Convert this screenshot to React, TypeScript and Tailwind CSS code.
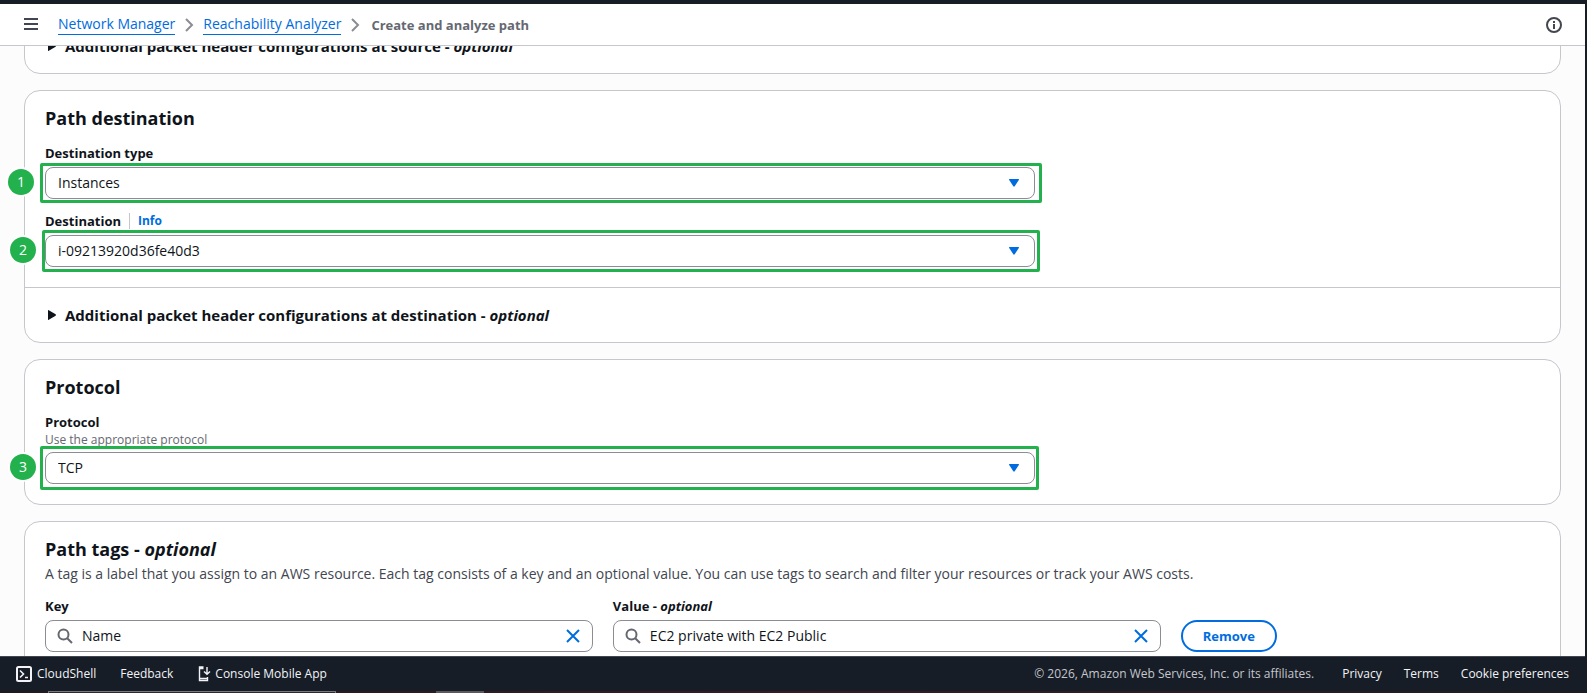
import { useId, useState } from "react";
import type { ReactNode } from "react";

interface SelectFieldProps {
  label: string;
  value: string;
  options: string[];
  step: number;
  outline: string;
  badge: string;
  info?: boolean;
  hint?: string;
}

function Card({ children }: { children: ReactNode }) {
  return <section className="rounded-2xl border border-[#c6c6cd] bg-white">{children}</section>;
}

function Expandable({ title }: { title: string }) {
  return (
    <button
      type="button"
      className="flex h-[54px] w-full items-center gap-2 px-5 text-left text-[15px] font-bold"
    >
      <svg viewBox="0 0 12 12" className="size-3 fill-[#0f141a]" aria-hidden="true">
        <path d="M3 1.6Q3 .8 3.8 1.2L10.6 5.3Q11.4 6 10.6 6.7L3.8 10.8Q3 11.2 3 10.4Z" />
      </svg>
      <span>
        {title} - <em>optional</em>
      </span>
    </button>
  );
}

function SelectField({ label, value, options, step, outline, badge, info, hint }: SelectFieldProps) {
  const id = useId();

  return (
    <div className="w-[66.2%]">
      <div className="flex h-5 items-center">
        <label htmlFor={id} className="text-[13px] font-bold">
          {label}
        </label>
        {info && (
          <a
            href="#info"
            className="ml-2 border-l border-[#c6c6cd] pl-2 text-xs font-bold text-[#006ce0]"
          >
            Info
          </a>
        )}
      </div>
      {hint && <p className="h-4 text-xs leading-4 text-[#656871]">{hint}</p>}
      <div className="relative mt-1">
        <select
          id={id}
          defaultValue={value}
          className="block h-8 w-full appearance-none rounded-lg border border-[#8c8c94] bg-white px-3"
        >
          {options.map((option) => (
            <option key={option}>{option}</option>
          ))}
        </select>
        <svg
          viewBox="0 0 12 10"
          className="pointer-events-none absolute top-[11px] right-[15px] h-[10px] w-3 fill-[#006ce0]"
          aria-hidden="true"
        >
          <path d="M1.6 1H10.4Q11.4 1 10.8 1.9L6.7 8.3Q6 9.2 5.3 8.3L1.2 1.9Q.6 1 1.6 1Z" />
        </svg>
        <div
          className={`pointer-events-none absolute rounded-[2px] border-3 border-[#22b14c] ${outline}`}
        />
        <span
          className={`absolute flex size-[26px] items-center justify-center rounded-full bg-[#22b14c] text-sm text-white ring-2 ring-white ${badge}`}
        >
          {step}
        </span>
      </div>
    </div>
  );
}

function SearchField({ label, initial }: { label: ReactNode; initial: string }) {
  const id = useId();
  const [value, setValue] = useState(initial);

  return (
    <div>
      <label htmlFor={id} className="block h-5 text-[13px] leading-5 font-bold">
        {label}
      </label>
      <div className="mt-1 flex h-8 items-center rounded-lg border border-[#8c8c94] bg-white px-[11px]">
        <svg viewBox="0 0 16 16" className="size-4 fill-none stroke-[#656871] stroke-2" aria-hidden="true">
          <circle cx="6.5" cy="6.5" r="5" />
          <path d="M10.2 10.2L15 15" />
        </svg>
        <input
          id={id}
          value={value}
          onChange={(e) => setValue(e.target.value)}
          className="ml-[9px] min-w-0 flex-1 outline-none"
        />
        <button type="button" aria-label="Clear" onClick={() => setValue("")}>
          <svg viewBox="0 0 16 16" className="size-4 fill-none stroke-[#006ce0] stroke-2" aria-hidden="true">
            <path d="M2 2L14 14M14 2L2 14" />
          </svg>
        </button>
      </div>
    </div>
  );
}

function Separator() {
  return (
    <svg viewBox="0 0 16 16" className="size-4 fill-none stroke-[#8c8c94] stroke-2" aria-hidden="true">
      <path d="M5 2L11 8L5 14" />
    </svg>
  );
}

function Header() {
  return (
    <header className="flex h-[42px] shrink-0 items-center border-b border-[#c6c6cd] bg-white px-[23px]">
      <button type="button" aria-label="Open menu">
        <svg viewBox="0 0 16 14" className="h-[14px] w-4 stroke-[#424650] stroke-2" aria-hidden="true">
          <path d="M1 1H15M1 6H15M1 11H15" />
        </svg>
      </button>
      <nav className="ml-[19px] flex items-center gap-[6px]" aria-label="Breadcrumb">
        <a href="#network-manager" className="border-b border-[#006ce0] leading-5 text-[#006ce0]">
          Network Manager
        </a>
        <Separator />
        <a href="#reachability" className="border-b border-[#006ce0] leading-5 text-[#006ce0]">
          Reachability Analyzer
        </a>
        <Separator />
        <span className="ml-[2px] text-[13px] font-bold text-[#656871]">Create and analyze path</span>
      </nav>
      <button type="button" aria-label="Info" className="ml-auto">
        <svg viewBox="0 0 16 16" className="size-4 fill-none stroke-[#424650] stroke-2" aria-hidden="true">
          <circle cx="8" cy="8" r="7" />
          <path d="M8 4V6M8 7V12" />
        </svg>
      </button>
    </header>
  );
}

function Footer() {
  return (
    <footer className="flex h-[35px] shrink-0 items-center border-t border-[#424650] bg-[#161d26] px-4 text-xs text-[#f3f3f7]">
      <button type="button" className="flex items-center gap-[5px]">
        <svg viewBox="0 0 16 16" className="size-4 fill-none stroke-current stroke-2" aria-hidden="true">
          <rect x="1" y="1" width="14" height="14" rx="1.5" />
          <path d="M4 4.5L7.5 8L4 11.5M9 11.5H12" strokeWidth="1.6" />
        </svg>
        CloudShell
      </button>
      <button type="button" className="ml-6">
        Feedback
      </button>
      <button type="button" className="ml-6 flex items-center gap-1">
        <svg viewBox="0 0 14 16" className="h-4 w-[14px] fill-none stroke-current" aria-hidden="true">
          <path d="M6.5 1H2.5V14.5H10.5V11M2.5 12.5H10.5M2.5 2.5H6.5" strokeWidth="1.4" />
          <path d="M10 1V8M7 5.5L10 8.3L13 5.5" strokeWidth="1.4" />
        </svg>
        Console Mobile App
      </button>
      <span className="ml-auto text-[#c6c6cd]">
        © 2026, Amazon Web Services, Inc. or its affiliates.
      </span>
      <a href="#privacy" className="ml-7">
        Privacy
      </a>
      <a href="#terms" className="ml-[22px]">
        Terms
      </a>
      <a href="#cookies" className="ml-[22px]">
        Cookie preferences
      </a>
    </footer>
  );
}

export default function App() {
  return (
    <div className="flex h-screen flex-col overflow-hidden border-t-4 border-r-2 border-[#161d26] bg-[#fcfcfd] font-['Open_Sans','Noto_Sans',sans-serif] text-sm leading-5 text-[#0f141a]">
      <Header />
      <main className="min-h-0 flex-1 overflow-hidden px-6">
        <div className="-mt-7 flex flex-col gap-4">
          <Card>
            <Expandable title="Additional packet header configurations at source" />
          </Card>

          <Card>
            <div className="px-5 pt-[15px] pb-5">
              <h2 className="text-lg leading-6 font-bold">Path destination</h2>
              <div className="mt-[13px] flex flex-col gap-3">
                <SelectField
                  label="Destination type"
                  value="Instances"
                  options={["Instances", "Internet Gateways", "IP Address"]}
                  step={1}
                  outline="-top-1 -right-[7px] -bottom-1 -left-[5px]"
                  badge="top-[2px] -left-[37px]"
                />
                <SelectField
                  label="Destination"
                  value="i-09213920d36fe40d3"
                  options={["i-09213920d36fe40d3"]}
                  step={2}
                  outline="-top-[5px] -right-[5px] -bottom-[5px] -left-[3px]"
                  badge="top-[2px] -left-[35px]"
                  info
                />
              </div>
            </div>
            <div className="border-t border-[#c6c6cd]">
              <Expandable title="Additional packet header configurations at destination" />
            </div>
          </Card>

          <Card>
            <div className="px-5 pt-[15px] pb-5">
              <h2 className="mb-[13px] text-lg leading-6 font-bold">Protocol</h2>
              <SelectField
                label="Protocol"
                value="TCP"
                options={["TCP", "UDP"]}
                step={3}
                outline="-top-[6px] -right-1 -bottom-[6px] -left-[5px]"
                badge="top-[2px] -left-[35px]"
                hint="Use the appropriate protocol"
              />
            </div>
          </Card>

          <Card>
            <div className="px-5 pt-[15px] pb-5">
              <h2 className="text-lg leading-6 font-bold">
                Path tags - <em>optional</em>
              </h2>
              <p className="mt-[3px] text-[#424650]">
                A tag is a label that you assign to an AWS resource. Each tag consists of a key and
                an optional value. You can use tags to search and filter your resources or track
                your AWS costs.
              </p>
              <div className="mt-3 grid grid-cols-[61fr_61fr_40fr] items-end gap-5">
                <SearchField label="Key" initial="Name" />
                <SearchField
                  label={
                    <>
                      Value - <em>optional</em>
                    </>
                  }
                  initial="EC2 private with EC2 Public"
                />
                <button
                  type="button"
                  className="h-8 justify-self-start rounded-full border-2 border-[#006ce0] px-5 text-[13px] font-bold text-[#006ce0]"
                >
                  Remove
                </button>
              </div>
            </div>
          </Card>
        </div>
      </main>
      <Footer />
      <div className="flex h-[2px] shrink-0 items-end bg-linear-to-r from-[#20191c] via-[#3a1a20] to-[#1c1c20]">
        <div className="ml-12 h-[2px] w-72 border-x border-t border-[#77777c] bg-[#2c2a2d]" />
        <div className="ml-[100px] h-[2px] w-12 bg-[#5a585b]" />
      </div>
    </div>
  );
}
